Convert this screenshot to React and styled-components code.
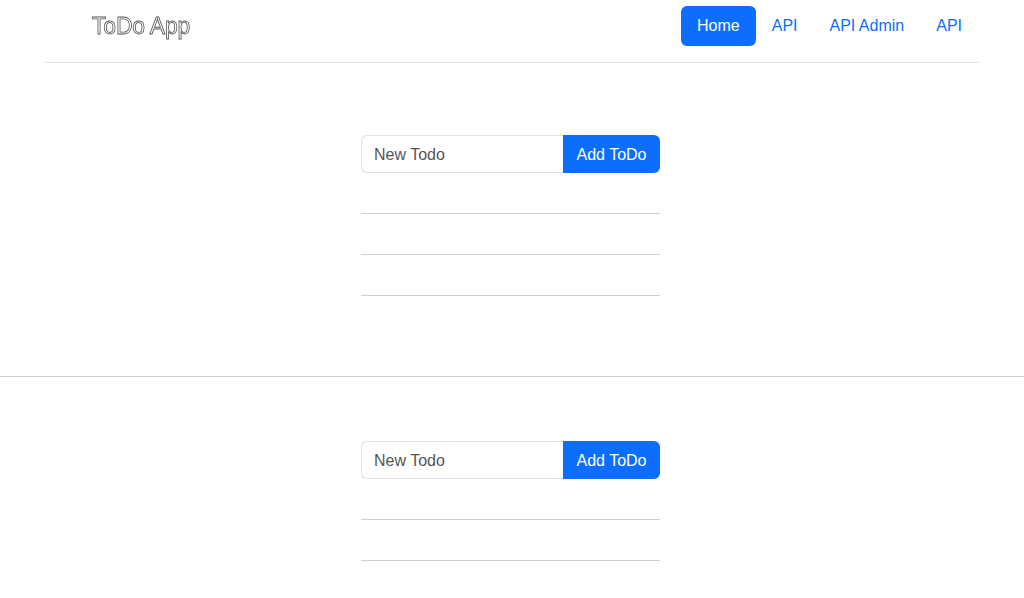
import React from 'react'
import styled, { createGlobalStyle } from 'styled-components'

const GlobalStyle = createGlobalStyle`
    body {
        margin: 0;
        background: #fff;
        font-family: "Liberation Sans", Arial, sans-serif;
        font-size: 16px;
        color: #212529;
    }
    * { box-sizing: border-box; }
`

const links = [
    { label: 'Home', active: true },
    { label: 'API' },
    { label: 'API Admin' },
    { label: 'API' },
]

function TodoSection({ items }) {
    return (
        <Section>
            <TodoBox>
                <InputGroup>
                    <TodoInput placeholder="New Todo" />
                    <AddButton>Add ToDo</AddButton>
                </InputGroup>
                <List>
                    {Array.from({ length: items }).map((_, i) => (
                        <Item key={i} />
                    ))}
                </List>
            </TodoBox>
        </Section>
    )
}

class App extends React.Component {
    render() {
        return (
            <>
                <GlobalStyle />
                <Header>
                    <Brand>ToDo App</Brand>
                    <Nav>
                        {links.map((l, i) => (
                            <NavLink key={i} $active={l.active}>{l.label}</NavLink>
                        ))}
                    </Nav>
                </Header>
                <TodoSection items={3} />
                <TodoSection items={3} />
            </>
        )
    }
}

export default App

const Header = styled.header`
    width: 936px;
    margin: 0 auto;
    display: flex;
    align-items: center;
    justify-content: space-between;
    padding: 6px 2px 16px 48px;
    border-bottom: 1px solid #e5e5e5;
`
const Brand = styled.div`
    font-size: 23px;
    color: #fff;
    -webkit-text-stroke: 0.8px #555;
    letter-spacing: -0.2px;
    will-change: transform;
`
const Nav = styled.nav`
    display: flex;
`
const NavLink = styled.a`
    display: block;
    padding: 8px 16px;
    line-height: 24px;
    font-size: 16px;
    border-radius: 6px;
    cursor: pointer;
    color: ${p => (p.$active ? '#fff' : '#0d6efd')};
    background: ${p => (p.$active ? '#0d6efd' : 'transparent')};
`
const Section = styled.section`
    padding: 72px 0 80px;
    border-bottom: 1px solid #d0d0d0;
    & + & {
        padding-top: 64px;
    }
`
const TodoBox = styled.div`
    width: 299px;
    margin-left: calc(50% - 151px);
`
const InputGroup = styled.div`
    display: flex;
    height: 38px;
`
const TodoInput = styled.input`
    width: 202px;
    border: 1px solid #dee2e6;
    border-right: none;
    border-radius: 6px 0 0 6px;
    padding: 7px 12px 5px;
    font-family: inherit;
    font-size: 16px;
    outline: none;
    &::placeholder {
        color: #555;
    }
`
const AddButton = styled.button`
    flex: 1;
    border: none;
    border-radius: 0 6px 6px 0;
    background: #0d6efd;
    color: #fff;
    font-family: inherit;
    font-size: 16px;
    padding: 7px 12px 5px;
    white-space: nowrap;
`
const List = styled.ul`
    list-style: none;
    margin: 0;
    padding: 0;
`
const Item = styled.li`
    height: 41px;
    border-bottom: 1px solid #cfcfcf;
`
